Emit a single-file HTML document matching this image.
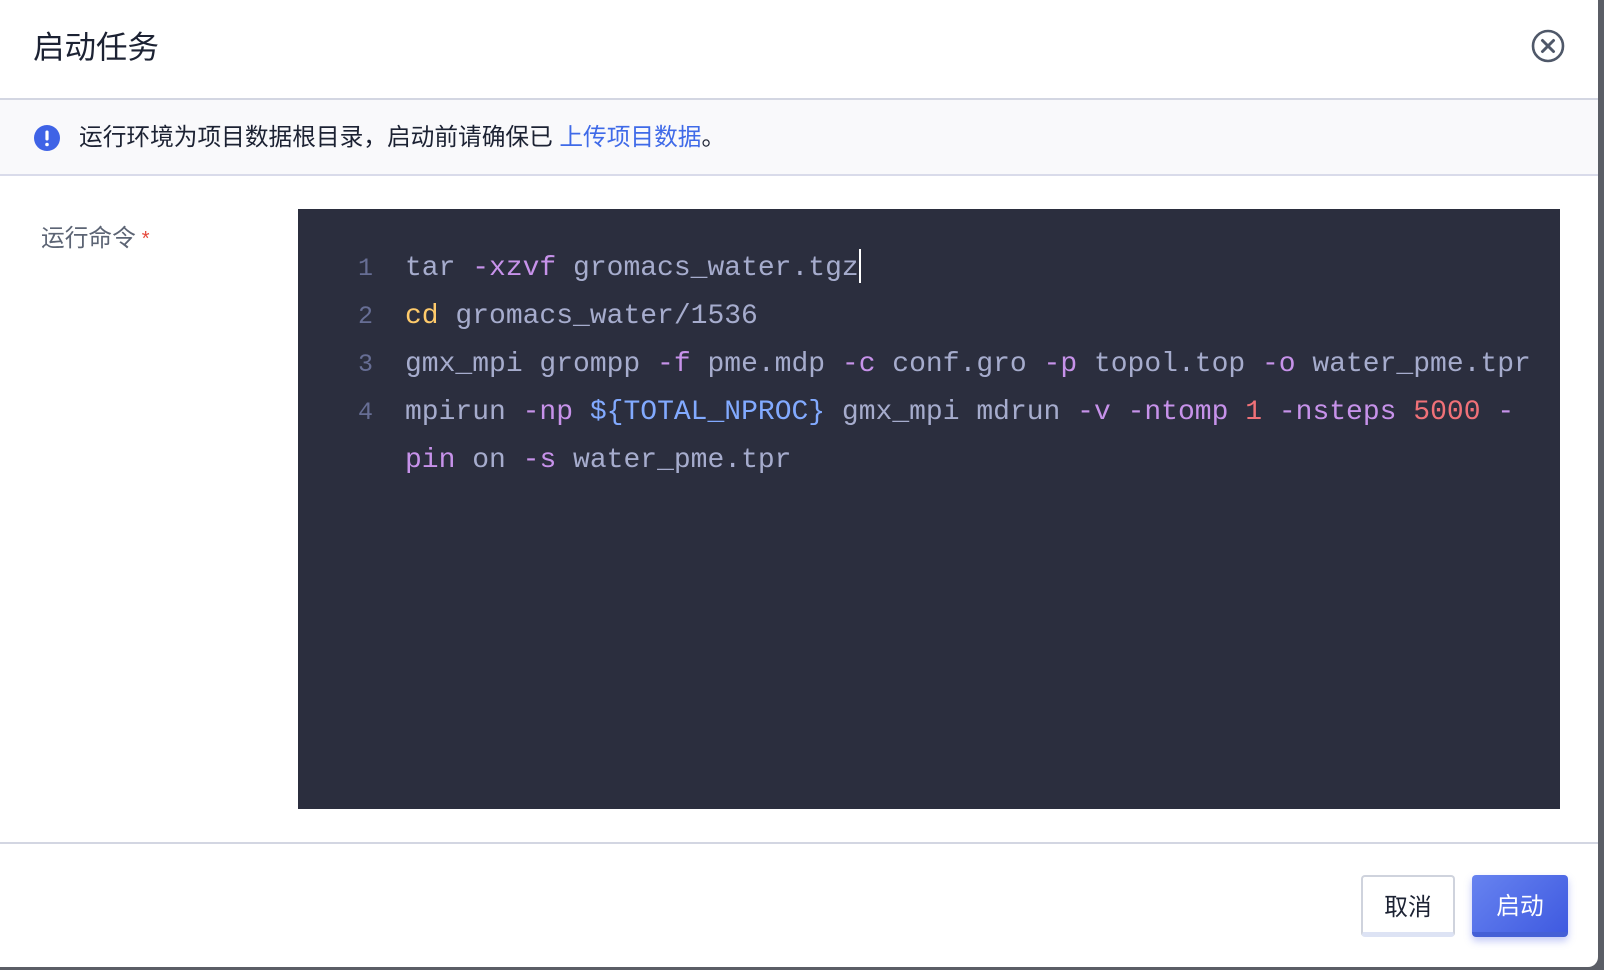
<!DOCTYPE html>
<html><head><meta charset="utf-8"><style>
*{margin:0;padding:0;box-sizing:border-box}
body{width:1604px;height:970px;background:#5b5e66;position:relative;overflow:hidden;font-family:"Liberation Sans","Noto Sans CJK SC",sans-serif}
.dlg{position:absolute;left:0;top:0;width:1598px;height:967px;background:#fff;border-radius:0 0 10px 0}
.title{position:absolute;left:33px;top:27px;font-size:31.5px;color:#1c2233;line-height:40px}
.close{position:absolute;left:1531px;top:29px}
.hdrline{position:absolute;left:0;top:98px;width:1598px;height:2px;background:#d3d6e2}
.info{position:absolute;left:0;top:100px;width:1598px;height:76px;background:#f9f9fb;border-bottom:2px solid #d9dbea}
.info span.t{position:absolute;left:79px;top:22px;font-size:23.7px;color:#1c2233;line-height:32px;white-space:nowrap}
.info a{color:#3f6ae8;text-decoration:none}
.lbl{position:absolute;left:41px;top:223px;font-size:23.7px;color:#5c6474;line-height:32px}
.lbl b{color:#e5483a;font-weight:normal;font-size:20px;margin-left:6px;vertical-align:top}
.code{position:absolute;left:298px;top:209px;width:1262px;height:600px;background:#2b2e3e}
.ln{position:absolute;left:55px;top:36px;font-family:"Liberation Mono",monospace;font-size:25px;line-height:48px;color:#676e95;text-align:right;width:20px}
.src{position:absolute;left:107px;top:36px;font-family:"Liberation Mono",monospace;font-size:28px;line-height:48px;color:#a6accd;white-space:pre}
.p{color:#c792ea}.y{color:#ffcb6b}.bl{color:#82aaff}.r{color:#f07178}
.cur{display:inline-block;width:2px;height:34px;background:#fff;vertical-align:-8px}
.ftline{position:absolute;left:0;top:842px;width:1598px;height:2px;background:#d3d6e2}
.btn{position:absolute;top:875px;height:62px;border-radius:4px;font-size:23.7px;text-align:center}
.cancel{left:1361px;width:94px;border:2px solid #cfd3dd;border-bottom:5px solid #dde3f4;color:#1c2233;background:#fff;line-height:62px}
.ok{left:1472px;width:96px;background:linear-gradient(135deg,#6783f0,#3f5ae0);color:#fff;box-shadow:0 4px 8px rgba(80,100,230,.35);border-bottom:5px solid #4560d6;line-height:64px}
</style></head><body>
<div class="dlg">
<div class="title">启动任务</div>
<svg class="close" width="34" height="34" viewBox="0 0 34 34"><circle cx="17" cy="17" r="15" fill="none" stroke="#4f5869" stroke-width="2.6"/><path d="M11.5 11.5L22.5 22.5M22.5 11.5L11.5 22.5" stroke="#4f5869" stroke-width="3" stroke-linecap="round"/></svg>
<div class="hdrline"></div>
<div class="info"><span class="t">运行环境为项目数据根目录，启动前请确保已 <a>上传项目数据</a>。</span></div>
<svg style="position:absolute;left:34px;top:125px" width="26" height="26" viewBox="0 0 26 26"><circle cx="13" cy="13" r="13" fill="#3f63e6"/><rect x="11.4" y="5.5" width="3.2" height="10" rx="1.5" fill="#fff"/><circle cx="13" cy="19.5" r="1.8" fill="#fff"/></svg>
<div class="lbl">运行命令<b>*</b></div>
<div class="code">
<div class="ln">1<br>2<br>3<br>4</div>
<div class="src">tar <span class="p">-xzvf</span> gromacs_water.tgz<span class="cur"></span>
<span class="y">cd</span> gromacs_water/1536
gmx_mpi grompp <span class="p">-f</span> pme.mdp <span class="p">-c</span> conf.gro <span class="p">-p</span> topol.top <span class="p">-o</span> water_pme.tpr
mpirun <span class="p">-np</span> <span class="bl">${TOTAL_NPROC}</span> gmx_mpi mdrun <span class="p">-v</span> <span class="p">-ntomp</span> <span class="r">1</span> <span class="p">-nsteps</span> <span class="r">5000</span> <span class="p">-</span>
<span class="p">pin</span> on <span class="p">-s</span> water_pme.tpr</div>
</div>
<div class="ftline"></div>
<div class="btn cancel">取消</div>
<div class="btn ok">启动</div>
</div>
</body></html>
